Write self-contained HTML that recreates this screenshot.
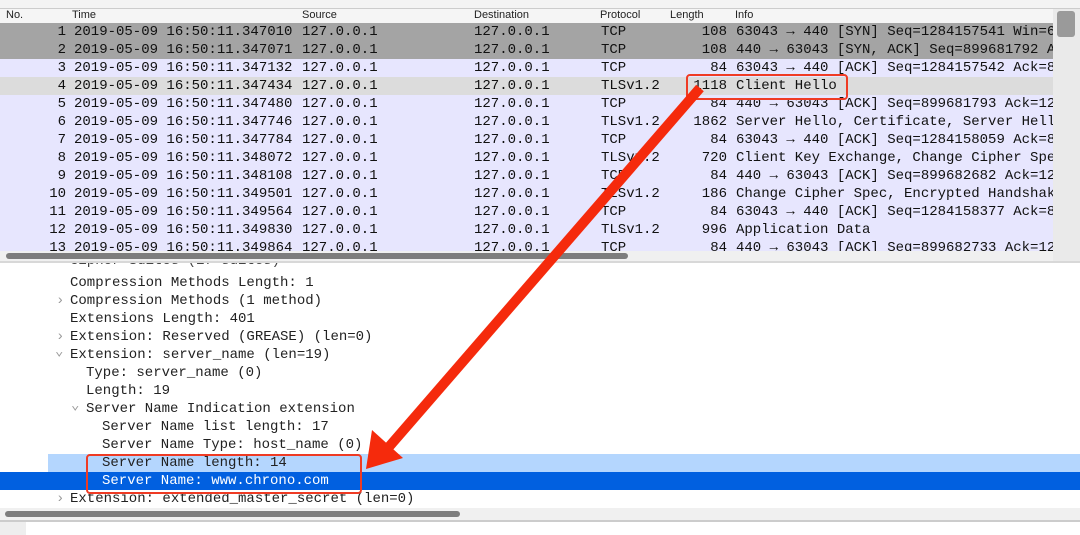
<!DOCTYPE html><html><head><style>
body{margin:0;width:1080px;height:535px;overflow:hidden;background:#fff;font-family:"Liberation Mono",monospace;font-size:14px;position:relative}
.a{position:absolute}
.r{position:absolute;left:0;width:1053px;height:18px;line-height:18px;white-space:pre;color:#111;overflow:hidden}
.r span{position:absolute;top:0}
.n{right:987px;text-align:right}
.t{left:74px}.s{left:302px}.ds{left:474px}.p{left:601px}.l{right:326px;text-align:right}.i{left:736px}
.d{position:absolute;left:0;width:1080px;height:18px;line-height:18px;white-space:pre;color:#222}
.d span{position:absolute;top:0}
.h{font-family:"Liberation Sans",sans-serif;font-size:11px;color:#222}
.c{color:#999}
</style></head><body>
<div class="a" style="left:0;top:0;width:1080px;height:8px;background:#f3f3f3;border-bottom:1px solid #ccc"></div>
<div class="a" style="left:0;top:9px;width:1053px;height:14px;background:#f5f5f5;border-bottom:1px solid #ccc"></div>
<div class="a h" style="left:6px;top:9px">No.</div>
<div class="a h" style="left:72px;top:9px">Time</div>
<div class="a h" style="left:302px;top:9px">Source</div>
<div class="a h" style="left:474px;top:9px">Destination</div>
<div class="a h" style="left:600px;top:9px">Protocol</div>
<div class="a h" style="left:670px;top:9px">Length</div>
<div class="a h" style="left:735px;top:9px">Info</div>
<div class="a" style="left:1053px;top:9px;width:27px;height:252px;background:#eaeaea"></div>
<div class="a" style="left:1057px;top:11px;width:18px;height:26px;background:#9a9a9a;border-radius:3px"></div>

<div class="r" style="top:23px;background:#a4a4a4"><span class="n">1</span><span class="t">2019-05-09 16:50:11.347010</span><span class="s">127.0.0.1</span><span class="ds">127.0.0.1</span><span class="p">TCP</span><span class="l">108</span><span class="i">63043 → 440 [SYN] Seq=1284157541 Win=6</span></div>
<div class="r" style="top:41px;background:#a4a4a4"><span class="n">2</span><span class="t">2019-05-09 16:50:11.347071</span><span class="s">127.0.0.1</span><span class="ds">127.0.0.1</span><span class="p">TCP</span><span class="l">108</span><span class="i">440 → 63043 [SYN, ACK] Seq=899681792 A</span></div>
<div class="r" style="top:59px;background:#e7e6fe"><span class="n">3</span><span class="t">2019-05-09 16:50:11.347132</span><span class="s">127.0.0.1</span><span class="ds">127.0.0.1</span><span class="p">TCP</span><span class="l">84</span><span class="i">63043 → 440 [ACK] Seq=1284157542 Ack=8</span></div>
<div class="r" style="top:77px;background:#dcdcdc"><span class="n">4</span><span class="t">2019-05-09 16:50:11.347434</span><span class="s">127.0.0.1</span><span class="ds">127.0.0.1</span><span class="p">TLSv1.2</span><span class="l">1118</span><span class="i">Client Hello</span></div>
<div class="r" style="top:95px;background:#e7e6fe"><span class="n">5</span><span class="t">2019-05-09 16:50:11.347480</span><span class="s">127.0.0.1</span><span class="ds">127.0.0.1</span><span class="p">TCP</span><span class="l">84</span><span class="i">440 → 63043 [ACK] Seq=899681793 Ack=12</span></div>
<div class="r" style="top:113px;background:#e7e6fe"><span class="n">6</span><span class="t">2019-05-09 16:50:11.347746</span><span class="s">127.0.0.1</span><span class="ds">127.0.0.1</span><span class="p">TLSv1.2</span><span class="l">1862</span><span class="i">Server Hello, Certificate, Server Hell</span></div>
<div class="r" style="top:131px;background:#e7e6fe"><span class="n">7</span><span class="t">2019-05-09 16:50:11.347784</span><span class="s">127.0.0.1</span><span class="ds">127.0.0.1</span><span class="p">TCP</span><span class="l">84</span><span class="i">63043 → 440 [ACK] Seq=1284158059 Ack=8</span></div>
<div class="r" style="top:149px;background:#e7e6fe"><span class="n">8</span><span class="t">2019-05-09 16:50:11.348072</span><span class="s">127.0.0.1</span><span class="ds">127.0.0.1</span><span class="p">TLSv1.2</span><span class="l">720</span><span class="i">Client Key Exchange, Change Cipher Spe</span></div>
<div class="r" style="top:167px;background:#e7e6fe"><span class="n">9</span><span class="t">2019-05-09 16:50:11.348108</span><span class="s">127.0.0.1</span><span class="ds">127.0.0.1</span><span class="p">TCP</span><span class="l">84</span><span class="i">440 → 63043 [ACK] Seq=899682682 Ack=12</span></div>
<div class="r" style="top:185px;background:#e7e6fe"><span class="n">10</span><span class="t">2019-05-09 16:50:11.349501</span><span class="s">127.0.0.1</span><span class="ds">127.0.0.1</span><span class="p">TLSv1.2</span><span class="l">186</span><span class="i">Change Cipher Spec, Encrypted Handshak</span></div>
<div class="r" style="top:203px;background:#e7e6fe"><span class="n">11</span><span class="t">2019-05-09 16:50:11.349564</span><span class="s">127.0.0.1</span><span class="ds">127.0.0.1</span><span class="p">TCP</span><span class="l">84</span><span class="i">63043 → 440 [ACK] Seq=1284158377 Ack=8</span></div>
<div class="r" style="top:221px;background:#e7e6fe"><span class="n">12</span><span class="t">2019-05-09 16:50:11.349830</span><span class="s">127.0.0.1</span><span class="ds">127.0.0.1</span><span class="p">TLSv1.2</span><span class="l">996</span><span class="i">Application Data</span></div>
<div class="r" style="top:239px;height:12px;background:#e7e6fe"><span class="n">13</span><span class="t">2019-05-09 16:50:11.349864</span><span class="s">127.0.0.1</span><span class="ds">127.0.0.1</span><span class="p">TCP</span><span class="l">84</span><span class="i">440 → 63043 [ACK] Seq=899682733 Ack=12</span></div>
<div class="a" style="left:0;top:251px;width:1053px;height:10px;background:#f0f0f0"></div>
<div class="a" style="left:6px;top:253px;width:622px;height:6px;background:#7d7d7d;border-radius:3px"></div>
<div class="a" style="left:0;top:261px;width:1080px;height:2px;background:#d8d8d8"></div>
<div class="a" style="left:0;top:263px;width:1080px;height:11px;overflow:hidden"><div class="d" style="top:-11px"><span style="left:70px;color:#444">Cipher Suites (17 suites)</span></div></div>
<div class="d" style="top:274px"><span style="left:70px">Compression Methods Length: 1</span></div>
<div class="d" style="top:292px"><span class="c" style="left:56px">›</span><span style="left:70px">Compression Methods (1 method)</span></div>
<div class="d" style="top:310px"><span style="left:70px">Extensions Length: 401</span></div>
<div class="d" style="top:328px"><span class="c" style="left:56px">›</span><span style="left:70px">Extension: Reserved (GREASE) (len=0)</span></div>
<div class="d" style="top:346px"><span class="c" style="left:55px;top:-3px">⌄</span><span style="left:70px">Extension: server_name (len=19)</span></div>
<div class="d" style="top:364px"><span style="left:86px">Type: server_name (0)</span></div>
<div class="d" style="top:382px"><span style="left:86px">Length: 19</span></div>
<div class="d" style="top:400px"><span class="c" style="left:71px;top:-3px">⌄</span><span style="left:86px">Server Name Indication extension</span></div>
<div class="d" style="top:418px"><span style="left:102px">Server Name list length: 17</span></div>
<div class="d" style="top:436px"><span style="left:102px">Server Name Type: host_name (0)</span></div>
<div class="d" style="top:454px;background:linear-gradient(to right,#fff 48px,#b4d6fe 48px)"><span style="left:102px">Server Name length: 14</span></div>
<div class="d" style="top:472px;background:#0160e0;color:#fff"><span style="left:102px">Server Name: www.chrono.com</span></div>
<div class="d" style="top:490px"><span class="c" style="left:56px">›</span><span style="left:70px">Extension: extended_master_secret (len=0)</span></div>
<div class="a" style="left:0;top:508px;width:1080px;height:12px;background:#f0f0f0"></div>
<div class="a" style="left:5px;top:511px;width:455px;height:6px;background:#7d7d7d;border-radius:3px"></div>
<div class="a" style="left:0;top:520px;width:1080px;height:2px;background:#ccc"></div>
<div class="a" style="left:0;top:522px;width:26px;height:13px;background:#eee"></div>
<div class="a" style="left:686px;top:74px;width:158px;height:22px;border:2px solid #ef3b24;border-radius:4px"></div>
<div class="a" style="left:86px;top:454px;width:272px;height:36px;border:2px solid #ef3b24;border-radius:4px"></div>
<svg class="a" style="left:0;top:0" width="1080" height="535"><line x1="700" y1="88" x2="388" y2="448" stroke="#f52a0c" stroke-width="10"/><polygon points="366,469 372,430 403,458" fill="#f52a0c"/></svg>
</body></html>
